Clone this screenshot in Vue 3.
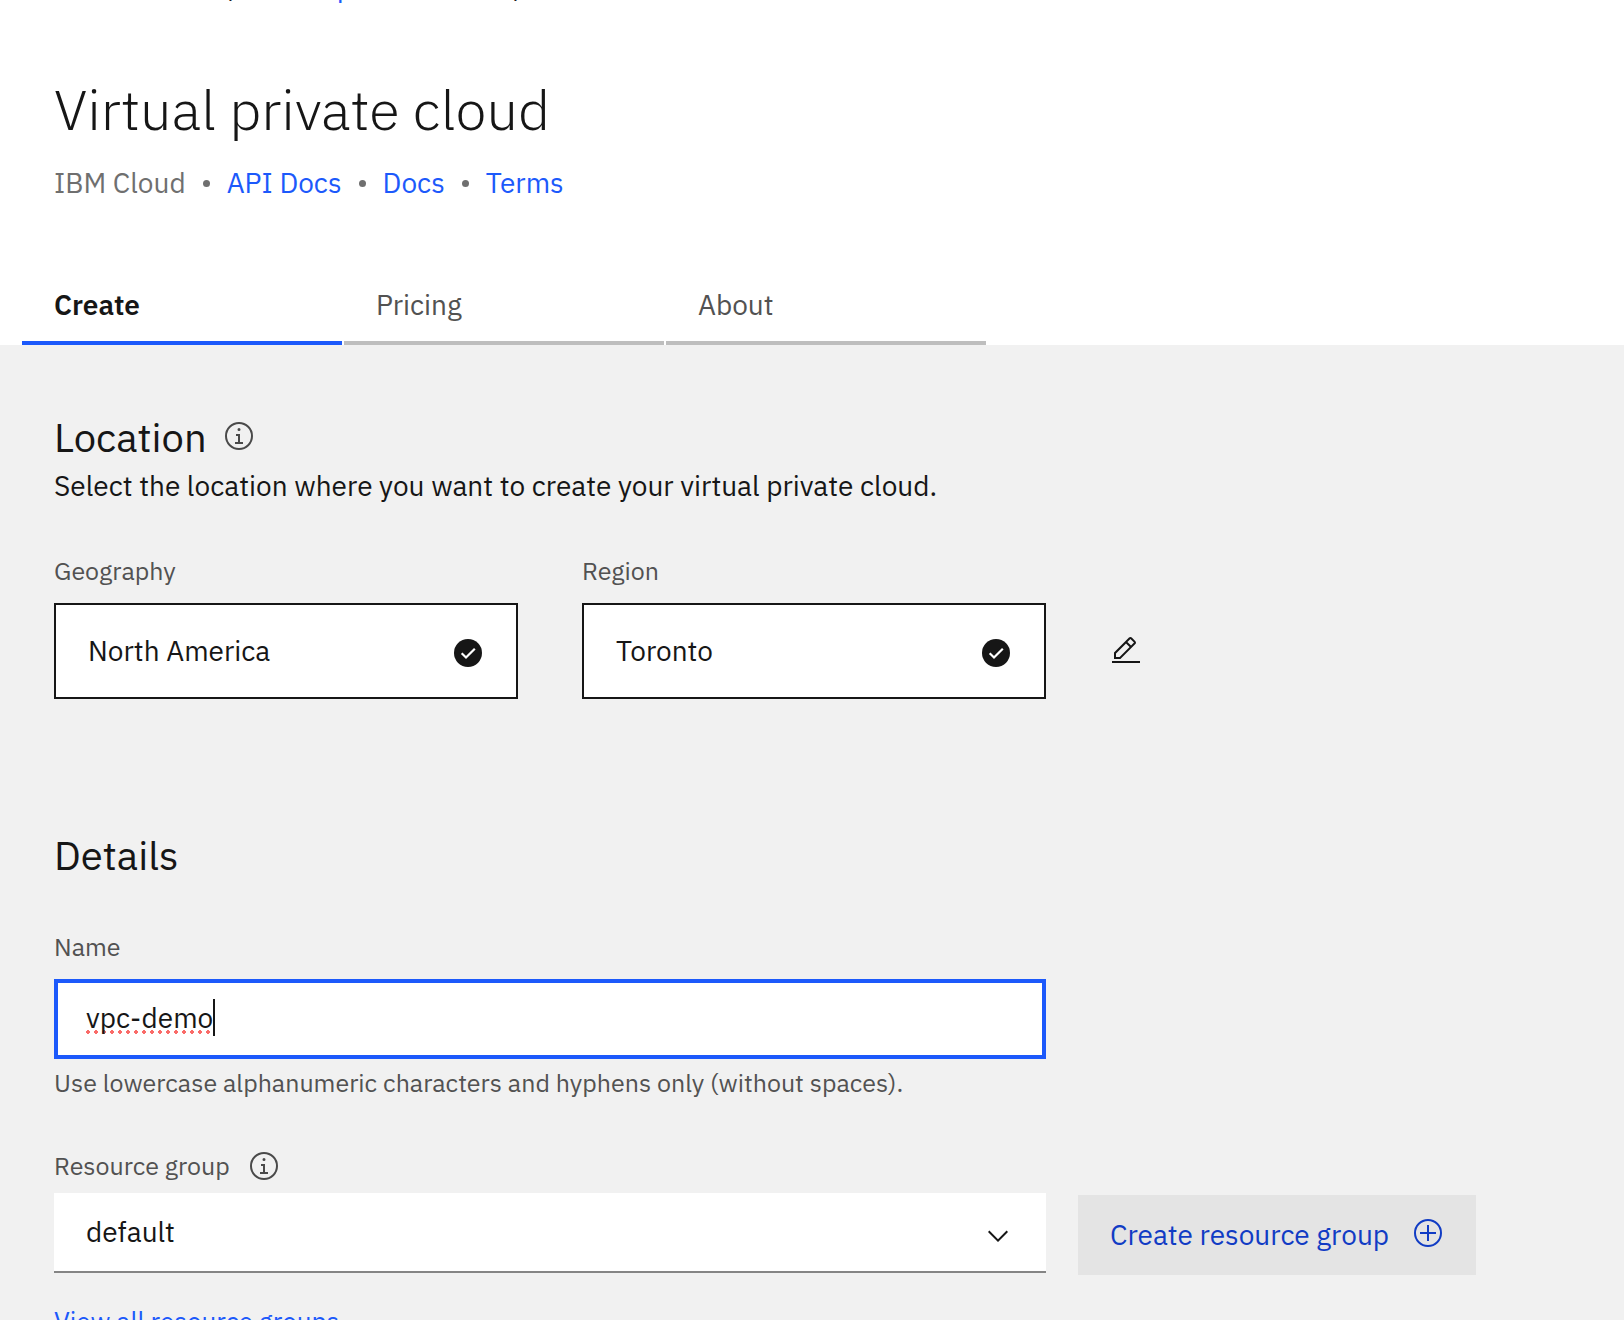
<script setup>
import { ref } from 'vue'

const tabs = ['Create', 'Pricing', 'About']
const activeTab = ref('Create')

const locations = [
  { id: 'geography', label: 'Geography', value: 'North America' },
  { id: 'region', label: 'Region', value: 'Toronto' }
]

const name = ref('vpc-demo')
const group = ref('default')
</script>

<template>
  <div class="page">
    <header class="header">
      <div class="trail">
        <span>,</span>
        <a href="#">p</a>
        <span>,</span>
      </div>
      <h1>Virtual private cloud</h1>
      <div class="meta">
        <span>IBM Cloud</span>
        <i class="dot"></i>
        <a href="#">API Docs</a>
        <i class="dot"></i>
        <a href="#">Docs</a>
        <i class="dot"></i>
        <a href="#">Terms</a>
      </div>
      <nav class="tabs" role="tablist">
        <button
          v-for="tab in tabs"
          :key="tab"
          type="button"
          role="tab"
          class="tab"
          :class="{ active: tab === activeTab }"
          :aria-selected="tab === activeTab"
          @click="activeTab = tab"
        >{{ tab }}</button>
      </nav>
    </header>

    <main class="content">
      <section>
        <div class="heading">
          <h2>Location</h2>
          <svg class="icon info" viewBox="0 0 32 32" aria-hidden="true">
            <path d="M17 22v-8h-4v2h2v6h-3v2h8v-2zM16 8a1.5 1.5 0 1 0 1.500 1.500A1.500 1.500 0 0 0 16 8z" />
            <path d="M16 30a14 14 0 1 1 14-14 14 14 0 0 1-14 14zm0-26a12 12 0 1 0 12 12A12 12 0 0 0 16 4z" />
          </svg>
        </div>
        <p class="lead">Select the location where you want to create your virtual private cloud.</p>

        <div class="locations">
          <div v-for="item in locations" :key="item.id" class="location">
            <label class="label" :for="item.id">{{ item.label }}</label>
            <button :id="item.id" type="button" class="tile">
              <span>{{ item.value }}</span>
              <svg class="icon check" viewBox="0 0 32 32" aria-hidden="true">
                <circle cx="16" cy="16" r="14" />
                <path d="M9.700 16.200l4.300 4.300 8.800-8.800" fill="none" stroke="#fff" stroke-width="2.200" />
              </svg>
            </button>
          </div>
          <button type="button" class="edit" aria-label="Edit location">
            <svg class="icon" viewBox="0 0 32 32" aria-hidden="true">
              <path d="M2 26h28v2H2zM25.400 9c.8-.8.8-2 0-2.800l-3.600-3.600c-.8-.8-2-.8-2.800 0l-15 15V24h6.400zm-5-5L24 7.600l-3 3L17.400 7zM6 22v-3.600l10-10 3.600 3.600-10 10z" />
            </svg>
          </button>
        </div>
      </section>

      <section class="details">
        <h2>Details</h2>

        <label class="label name-label" for="name">Name</label>
        <label class="field" for="name">
          <input id="name" v-model="name" type="text" class="typed" spellcheck="false" />
        </label>
        <p class="helper">Use lowercase alphanumeric characters and hyphens only (without spaces).</p>

        <div class="group-label">
          <label class="label" for="group">Resource group</label>
          <svg class="icon info" viewBox="0 0 32 32" aria-hidden="true">
            <path d="M17 22v-8h-4v2h2v6h-3v2h8v-2zM16 8a1.5 1.5 0 1 0 1.500 1.500A1.500 1.500 0 0 0 16 8z" />
            <path d="M16 30a14 14 0 1 1 14-14 14 14 0 0 1-14 14zm0-26a12 12 0 1 0 12 12A12 12 0 0 0 16 4z" />
          </svg>
        </div>
        <div class="group-row">
          <div class="select-wrap">
            <select id="group" v-model="group">
              <option>default</option>
            </select>
            <svg class="icon chevron" viewBox="0 0 16 16" aria-hidden="true">
              <path d="M8 11L3 6l.7-.7L8 9.600l4.300-4.300.7.7z" />
            </svg>
          </div>
          <button type="button" class="create">
            <span>Create resource group</span>
            <svg class="icon" viewBox="0 0 32 32" aria-hidden="true">
              <path d="M16 4a12 12 0 1 1-12 12A12 12 0 0 1 16 4m0-2a14 14 0 1 0 14 14A14 14 0 0 0 16 2z" />
              <path d="M24 15h-7V8h-2v7H8v2h7v7h2v-7h7z" />
            </svg>
          </button>
        </div>
        <a class="all" href="#">View all resource groups</a>
      </section>
    </main>
  </div>
</template>

<style>
body {
  margin: 0;
}
</style>

<style scoped>
.page {
  display: flex;
  flex-direction: column;
  height: 100vh;
  overflow: hidden;
  background: #fff;
  color: #161616;
  font-family: "IBM Plex Sans", Roboto, sans-serif;
  font-size: 28px;
  line-height: 36px;
}
* {
  box-sizing: border-box;
}
h1,
h2,
p {
  margin: 0;
}
a {
  color: #1c59fb;
  text-decoration: none;
}
button,
input,
select {
  margin: 0;
  border: 0;
  border-radius: 0;
  font: inherit;
  color: inherit;
}
button {
  cursor: pointer;
}
.icon {
  display: block;
  flex: none;
  width: 32px;
  height: 32px;
  fill: currentColor;
}

.header {
  flex: none;
}
.trail {
  display: flex;
  align-items: flex-end;
  height: 5px;
  padding-left: 228px;
  overflow: hidden;
}
.trail a {
  padding: 0 160px 0 101px;
}
h1 {
  padding: 72px 54px 0;
  font-size: 56px;
  font-weight: 300;
  line-height: 64px;
}
.meta {
  display: flex;
  align-items: center;
  gap: 17px;
  padding: 24px 54px 0;
  color: #6f6f6f;
}
.dot {
  width: 7px;
  height: 7px;
  border-radius: 50%;
  background: currentColor;
}
.tabs {
  display: flex;
  gap: 2px;
  padding: 70px 22px 0;
}
.tab {
  flex: 0 1 320px;
  padding: 16px 32px 18px;
  border-bottom: 4px solid #bebebe;
  background: none;
  color: #525252;
  text-align: left;
}
.tab.active {
  border-bottom-color: #1c59fb;
  color: #161616;
  font-weight: 600;
}

.content {
  flex: 1 0 auto;
  padding: 68px 54px 0;
  background: #f1f1f1;
}
.heading {
  display: flex;
  align-items: center;
  gap: 16px;
}
h2 {
  font-size: 40px;
  font-weight: 400;
  line-height: 48px;
}
.info {
  color: #4a4a4a;
}
.heading .info {
  margin-bottom: 2px;
}
.lead {
  margin-top: 7px;
}
.label {
  display: block;
  color: #525252;
  font-size: 25px;
  line-height: 32px;
}
.locations {
  display: flex;
  align-items: flex-end;
  gap: 64px;
  margin-top: 51px;
}
.location {
  flex: 0 1 464px;
}
.tile {
  display: flex;
  align-items: center;
  justify-content: space-between;
  width: 100%;
  height: 96px;
  margin-top: 16px;
  padding: 0 32px;
  border: 2px solid #161616;
  background: #fff;
}
.check {
  margin-top: 4px;
}
.edit {
  display: flex;
  align-items: center;
  height: 96px;
  padding: 0;
  background: none;
}

.details {
  margin-top: 132px;
}
.name-label {
  margin-top: 52px;
}
.field {
  display: flex;
  align-items: center;
  max-width: 992px;
  height: 80px;
  margin-top: 16px;
  padding: 0 28px 4px;
  border: 4px solid #1c59fb;
  background: #fff;
}
/* spelling dots under the value, caret at its end */
.typed {
  field-sizing: content;
  height: 37px;
  padding: 0;
  border-right: 2px solid #161616;
  outline: none;
  background: radial-gradient(circle, #fa6b68 2px, transparent 2px) -2px 30px / 8px 6px repeat-x;
  line-height: 37px;
  caret-color: transparent;
}
.helper {
  margin-top: 8px;
  color: #525252;
  font-size: 25px;
  line-height: 32px;
}
.group-label {
  display: flex;
  gap: 18px;
  margin-top: 51px;
}
.group-row {
  display: flex;
  align-items: flex-start;
  gap: 32px;
  margin-top: 11px;
}
.select-wrap {
  position: relative;
  flex: 0 1 992px;
}
select {
  display: block;
  width: 100%;
  height: 80px;
  padding: 0 32px;
  border-bottom: 2px solid #858585;
  appearance: none;
  background: #fff;
}
.chevron {
  position: absolute;
  top: 27px;
  right: 32px;
  pointer-events: none;
}
.create {
  display: flex;
  flex: 0 0 398px;
  align-items: center;
  justify-content: space-between;
  height: 80px;
  margin-top: 2px;
  padding: 0 32px;
  background: #e4e4e4;
  color: #113cc4;
}
.create .icon {
  margin-bottom: 4px;
}
.all {
  display: block;
  margin-top: 30px;
  font-size: 26px;
  line-height: 32px;
}
</style>
